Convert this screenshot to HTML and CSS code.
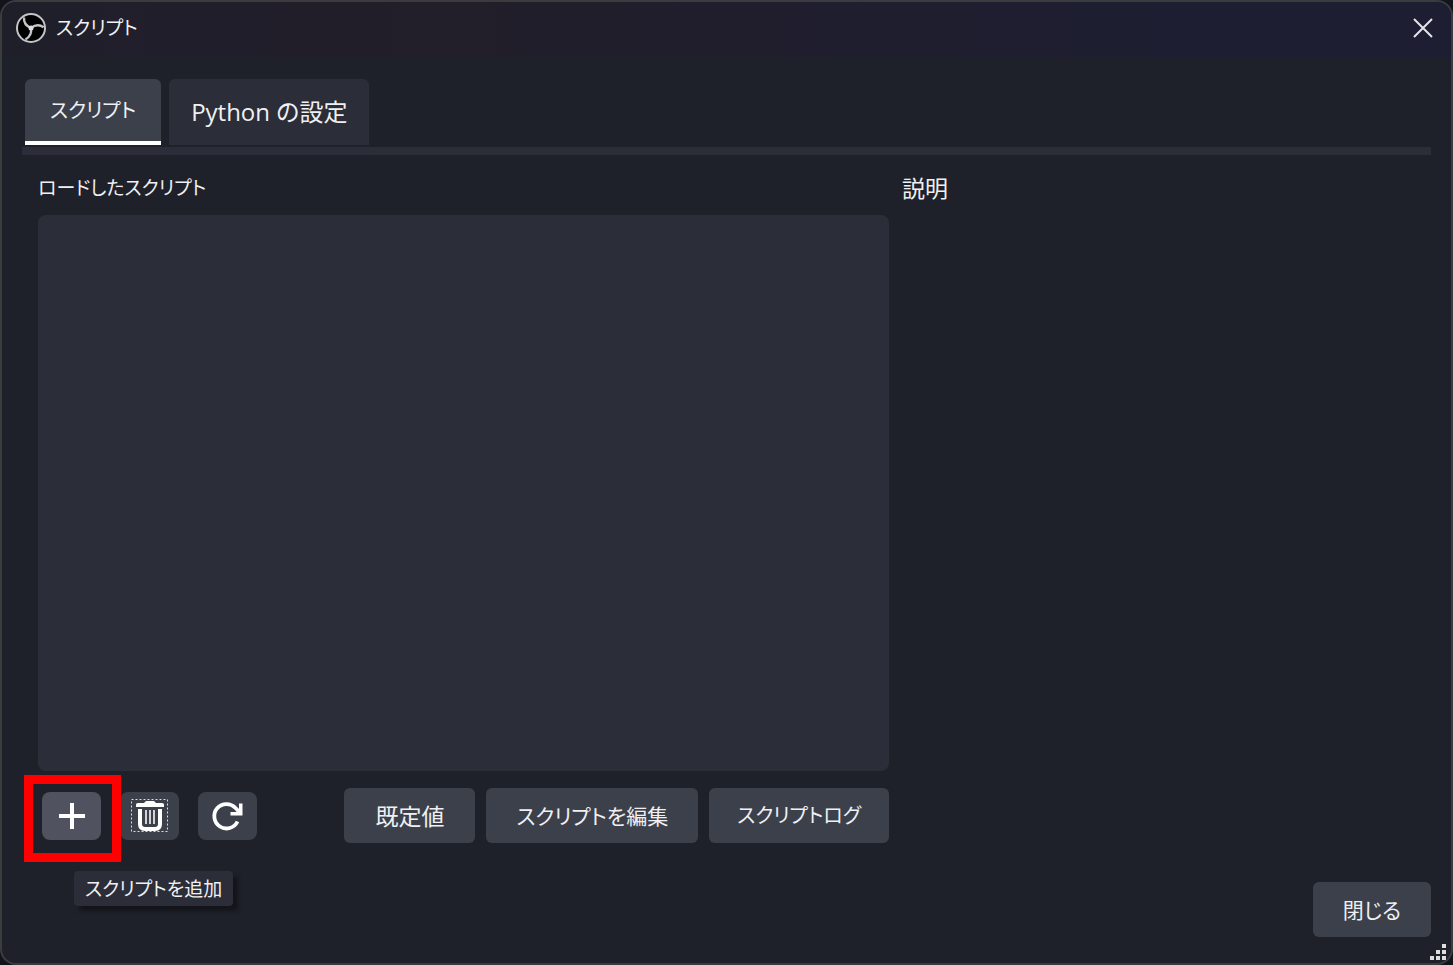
FILE: index.html
```
<!doctype html>
<html lang="ja">
<head>
<meta charset="utf-8">
<title>スクリプト</title>
<link rel="stylesheet" href="styles.css">
</head>
<body>
<div class="window">
  <header class="titlebar">
    <svg class="logo" viewBox="0 0 32 32">
      <circle cx="16" cy="16" r="14" fill="#000" stroke="#c4c4c8" stroke-width="2"/>
      <g fill="none" stroke="#c4c4c8" stroke-width="2.400">
        <path d="M16 16Q8.500 13 9 5.500"/>
        <path d="M16 16Q8.500 13 9 5.500" transform="rotate(120 16 16)"/>
        <path d="M16 16Q8.500 13 9 5.500" transform="rotate(240 16 16)"/>
      </g>
      <circle cx="16" cy="16" r="2.500" fill="#dedee0"/>
    </svg>
    <h1>スクリプト</h1>
    <button class="close" type="button" aria-label="閉じる">
      <svg viewBox="0 0 20 20"><path d="M1 1L19 19M19 1L1 19" fill="none" stroke="#e4e4e8" stroke-width="2"/></svg>
    </button>
  </header>

  <nav class="tabs">
    <button class="tab active" type="button">スクリプト</button>
    <button class="tab wide" type="button">Python の設定</button>
  </nav>

  <main class="content">
    <section class="loaded">
      <h2>ロードしたスクリプト</h2>
      <ul class="list"></ul>
      <div class="toolbar">
        <div class="highlight">
          <button class="icon hover" type="button" aria-label="スクリプトを追加" aria-describedby="tip">
            <svg viewBox="0 0 40 36"><path d="M20 5V31M7 18H33" fill="none" stroke="#fff" stroke-width="4"/></svg>
          </button>
          <div class="tooltip" id="tip" role="tooltip">スクリプトを追加</div>
        </div>
        <button class="icon" type="button" aria-label="削除">
          <svg viewBox="0 0 40 36">
            <rect x="1.500" y="1.500" width="36" height="32" fill="none" stroke="#dcdcdc" stroke-dasharray="2 2"/>
            <path d="M6 9V6.500Q6 5 8 5H14L16 3H24L26 5H32Q34 5 34 6.500V9Z" fill="#fff"/>
            <path d="M10 11V26Q10 31 15 31H25Q30 31 30 26V11" fill="none" stroke="#fff" stroke-width="4"/>
            <path d="M16 12V26M20 12V26M24 12V26" fill="none" stroke="#d2d2d6" stroke-width="2"/>
          </svg>
        </button>
        <button class="icon" type="button" aria-label="再読み込み">
          <svg viewBox="0 0 40 36">
            <path d="M29.500 23.500A12.200 12.200 0 1 1 27.500 10L32 14.500" fill="none" stroke="#fff" stroke-width="3.800"/>
            <path d="M31 5.500H34.500V17.500H22.500V14H28L31 11Z" fill="#fff"/>
          </svg>
        </button>
        <div class="actions">
          <button class="btn" type="button">既定値</button>
          <button class="btn edit" type="button">スクリプトを編集</button>
          <button class="btn log" type="button">スクリプトログ</button>
        </div>
      </div>
    </section>
    <section class="description">
      <h2 class="kanji">説明</h2>
    </section>
  </main>

  <footer class="footer">
    <button class="btn edit" type="button">閉じる</button>
  </footer>
  <svg class="grip" viewBox="0 0 16 16" fill="#dddde0">
    <path d="M12 0h4v4h-4zM6 6h4v4h-4zM12 6h4v4h-4zM0 12h4v4h-4zM6 12h4v4h-4zM12 12h4v4h-4z"/>
  </svg>
</div>
</body>
</html>
```

FILE: styles.css
```
* {
	box-sizing: border-box;
}
body {
	margin: 0;
	background: #12141c;
	color: #f0f0f2;
	font-family: "Open Sans", "Noto Sans CJK JP", sans-serif;
	font-size: 20px;
	line-height: 32px;
	font-feature-settings: "palt";
}
h1, h2, ul {
	margin: 0;
	padding: 0;
	font-size: 19px;
	font-weight: normal;
}
button {
	border: 0;
	padding: 0;
	color: inherit;
	font: inherit;
	font-feature-settings: inherit;
	white-space: nowrap;
}
svg {
	display: block;
}
.window {
	position: relative;
	display: flex;
	flex-direction: column;
	min-height: 100vh;
	overflow: hidden;
	background: #1f212a;
	border: 2px solid #3b3c40;
	border-radius: 16px;
}

/* title bar */
.titlebar {
	display: flex;
	align-items: center;
	gap: 9px;
	height: 55px;
	padding: 0 18px 3px 13px;
	background: linear-gradient(to right, #1f1f2a, #221e2a 30%, #1e1e32 80%);
}
.logo {
	width: 32px;
	height: 32px;
}
.close {
	margin-left: auto;
	background: none;
}
.close svg {
	width: 20px;
	height: 20px;
}

/* tabs */
.tabs {
	display: flex;
	gap: 8px;
	margin: 22px 20px 0;
	padding: 0 3px 2px;
	border-bottom: 8px solid #2b2d38;
}
.tab {
	height: 66px;
	padding: 0 25px;
	background: #2b2d38;
	border-radius: 6px 6px 0 0;
}
.tab.active {
	padding-top: 2px;
	background: #3c404b;
	border-bottom: 4px solid #fff;
}
.tab.wide {
	padding: 0 22px;
	font-size: 24px;
}

/* script list and description */
.content {
	display: grid;
	flex: 1;
	grid-template-columns: 851fr 529fr;
	gap: 13px;
	padding: 17px 20px 0 36px;
}
.loaded {
	display: flex;
	flex-direction: column;
}
.kanji {
	font-size: 23px;
}
.list {
	flex: 1;
	margin-top: 11px;
	background: #2b2d38;
	border-radius: 8px;
	list-style: none;
}
.toolbar {
	display: flex;
	align-items: center;
	gap: 19px;
	padding: 17px 0 0 4px;
}
.icon {
	display: flex;
	align-items: center;
	justify-content: center;
	width: 59px;
	height: 48px;
	background: #3c404b;
	border-radius: 8px;
}
.icon.hover {
	background: #50535f;
}
.icon svg {
	width: 40px;
	height: 36px;
}
.highlight {
	position: relative;
}
.highlight::after {
	content: "";
	position: absolute;
	inset: -17px -20px -22px -18px;
	border: 9px solid #f00;
}
.tooltip {
	position: absolute;
	top: 79px;
	left: 32px;
	padding: 2px 11px 1px;
	background: #2b2d38;
	border-radius: 4px;
	box-shadow: 5px 5px 4px #14151b;
	font-size: 19px;
	white-space: nowrap;
}
.actions {
	display: flex;
	gap: 11px;
	margin-left: auto;
}
.btn {
	height: 55px;
	padding: 0 31px;
	background: #3c404b;
	border-radius: 6px;
	font-size: 23px;
}
.btn.edit {
	padding: 0 30px;
	font-size: 21px;
}
.btn.log {
	padding: 0 28px;
	font-size: 20px;
}

.footer {
	display: flex;
	justify-content: flex-end;
	padding: 39px 20px 26px;
}
.grip {
	position: absolute;
	right: 5px;
	bottom: 3px;
	width: 16px;
	height: 16px;
}
```
